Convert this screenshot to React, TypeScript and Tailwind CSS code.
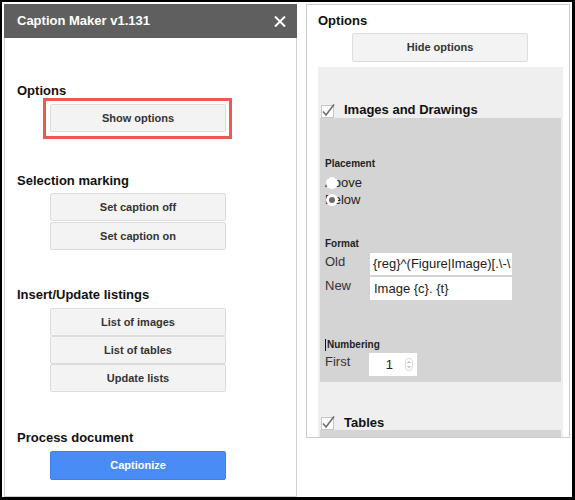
import type { ReactNode } from 'react'

const font = "font-[family-name:'Liberation_Sans',Arial,sans-serif]"

function GrayButton({ children, className = '' }: { children: ReactNode; className?: string }) {
  return (
    <div
      className={`flex w-[176px] shrink-0 items-center justify-center rounded-[2px] border border-[#dcdcdc] bg-[#f3f3f3] text-[11px] font-bold text-[#333] ${className}`}
    >
      {children}
    </div>
  )
}

function Heading({ children, className = '' }: { children: ReactNode; className?: string }) {
  return <div className={`h-[16px] text-[13px] font-bold leading-[16px] text-[#111] ${className}`}>{children}</div>
}

function CheckBox() {
  return (
    <svg width="14" height="15" viewBox="0 0 14 15" className="shrink-0">
      <rect x="0.5" y="2.5" width="12" height="12" fill="#fff" stroke="#c6c6c6" />
      <polyline points="2,8.5 5,12 13,1.5" fill="none" stroke="#6d6d6d" strokeWidth="1.6" />
    </svg>
  )
}

function Radio({ label, checked }: { label: string; checked?: boolean }) {
  return (
    <div className="relative h-[17px] text-[13px] leading-[17px] text-[#222]">
      {label}
      <span className="absolute left-[1px] top-[2.5px] flex h-[12px] w-[12px] items-center justify-center rounded-full bg-white">
        {checked && <span className="h-[6px] w-[6px] rounded-full bg-[#6b6b6b]" />}
      </span>
    </div>
  )
}

function Spinner() {
  return (
    <svg width="8" height="13" viewBox="0 0 8 13">
      <rect x="0.5" y="0.5" width="7" height="12" rx="3.5" fill="#fff" stroke="#d8d8d8" />
      <polyline points="2.5,5 4,3.5 5.5,5" fill="none" stroke="#8a8a8a" strokeWidth="0.9" />
      <polyline points="2.5,8 4,9.5 5.5,8" fill="none" stroke="#8a8a8a" strokeWidth="0.9" />
    </svg>
  )
}

export default function App() {
  return (
    <div
      className={`${font} flex h-[500px] w-[575px] items-start gap-[9px] border-b-[3px] border-l-2 border-r-[3px] border-t-2 border-black bg-white pl-[2px] pt-[2px]`}
    >
      {/* Sidebar: options hidden */}
      <div className="flex h-[493px] w-[293px] shrink-0 flex-col">
        <div className="flex h-[34px] shrink-0 items-center justify-between bg-[#5f5f5f] pl-[13px] pr-[11px]">
          <span className="text-[13px] font-bold text-white">Caption Maker v1.131</span>
          <svg width="12" height="11" viewBox="0 0 12 11">
            <line x1="1" y1="0.5" x2="11" y2="10.5" stroke="#fff" strokeWidth="2" />
            <line x1="11" y1="0.5" x2="1" y2="10.5" stroke="#fff" strokeWidth="2" />
          </svg>
        </div>
        <div className="flex flex-1 flex-col border-x border-b border-[#cfcfcf] pl-[12px]">
          <Heading className="mt-[45px]">Options</Heading>
          <div className="relative ml-[33px] mt-[5px] w-[176px]">
            <GrayButton className="h-[28px]">Show options</GrayButton>
            <div className="absolute -bottom-[7px] -left-[7px] -right-[6px] -top-[6px] border-[3px] border-[#ec5a52]" />
          </div>

          <Heading className="mt-[41px]">Selection marking</Heading>
          <div className="ml-[33px] mt-[4px] flex flex-col gap-[1px]">
            <GrayButton className="h-[28px]">Set caption off</GrayButton>
            <GrayButton className="h-[28px]">Set caption on</GrayButton>
          </div>

          <Heading className="mt-[37px]">Insert/Update listings</Heading>
          <div className="ml-[33px] mt-[5px] flex flex-col">
            <GrayButton className="h-[28px]">List of images</GrayButton>
            <GrayButton className="h-[28px]">List of tables</GrayButton>
            <GrayButton className="h-[28px]">Update lists</GrayButton>
          </div>

          <Heading className="mt-[38px]">Process document</Heading>
          <div className="ml-[33px] mt-[5px] flex h-[29px] w-[176px] items-center justify-center rounded-[2px] border border-[#3c80ec] bg-[#4a8cf6] text-[11px] font-bold text-white">
            Captionize
          </div>
        </div>
      </div>

      {/* Sidebar: options shown */}
      <div className="h-[434px] w-[264px] shrink-0 overflow-hidden border border-[#cccccc] pt-[8px]">
        <Heading className="ml-[11px]">Options</Heading>
        <GrayButton className="ml-[45px] mt-[4px] h-[29px]">Hide options</GrayButton>

        <div className="ml-[11px] mt-[5px] w-[245px] bg-[#efefef] pt-[35px]">
          <div className="flex h-[16px] items-center gap-[9px] pl-[3px]">
            <CheckBox />
            <span className="text-[13px] font-bold text-[#111]">Images and Drawings</span>
          </div>

          <div className="mx-[2px] bg-[#d4d4d4] pb-[6px] pl-[5px] pt-[39px]">
            <div className="h-[13px] text-[10px] font-bold leading-[13px] text-[#222]">Placement</div>
            <div className="mt-[4px]">
              <Radio label="Above" />
              <Radio label="Below" checked />
            </div>

            <div className="mt-[29px] h-[13px] text-[10px] font-bold leading-[13px] text-[#222]">Format</div>
            <div className="mt-[3px] flex items-start">
              <span className="w-[45px] text-[13px] leading-[17px] text-[#333]">Old</span>
              <div className="flex h-[22px] w-[142px] items-center overflow-hidden whitespace-nowrap bg-white pl-[3px] text-[13px] text-[#222]">
                {'{reg}^(Figure|Image)[.\\-\\'}
              </div>
            </div>
            <div className="mt-[2px] flex items-start">
              <span className="w-[45px] text-[13px] leading-[17px] text-[#333]">New</span>
              <div className="flex h-[23px] w-[142px] items-center bg-white pl-[4px] text-[13px] text-[#222]">
                Image {'{c}'}. {'{t}'}
              </div>
            </div>

            <div className="mt-[38px] flex h-[13px] items-center gap-[1px]">
              <span className="h-[12px] w-[1px] bg-[#111]" />
              <span className="text-[10px] font-bold leading-[13px] text-[#222]">Numbering</span>
            </div>
            <div className="mt-[2px] flex items-start">
              <span className="w-[44px] text-[13px] leading-[17px] text-[#333]">First</span>
              <div className="flex h-[23px] w-[48px] items-center justify-end gap-[12px] bg-white pr-[4px] text-[13px] text-[#222]">
                <span>1</span>
                <Spinner />
              </div>
            </div>
          </div>

          <div className="mt-[33px] flex h-[15px] items-center gap-[9px] pl-[3px]">
            <CheckBox />
            <span className="text-[13px] font-bold text-[#111]">Tables</span>
          </div>
          <div className="mx-[2px] h-[30px] bg-[#d4d4d4]" />
        </div>
      </div>
    </div>
  )
}
